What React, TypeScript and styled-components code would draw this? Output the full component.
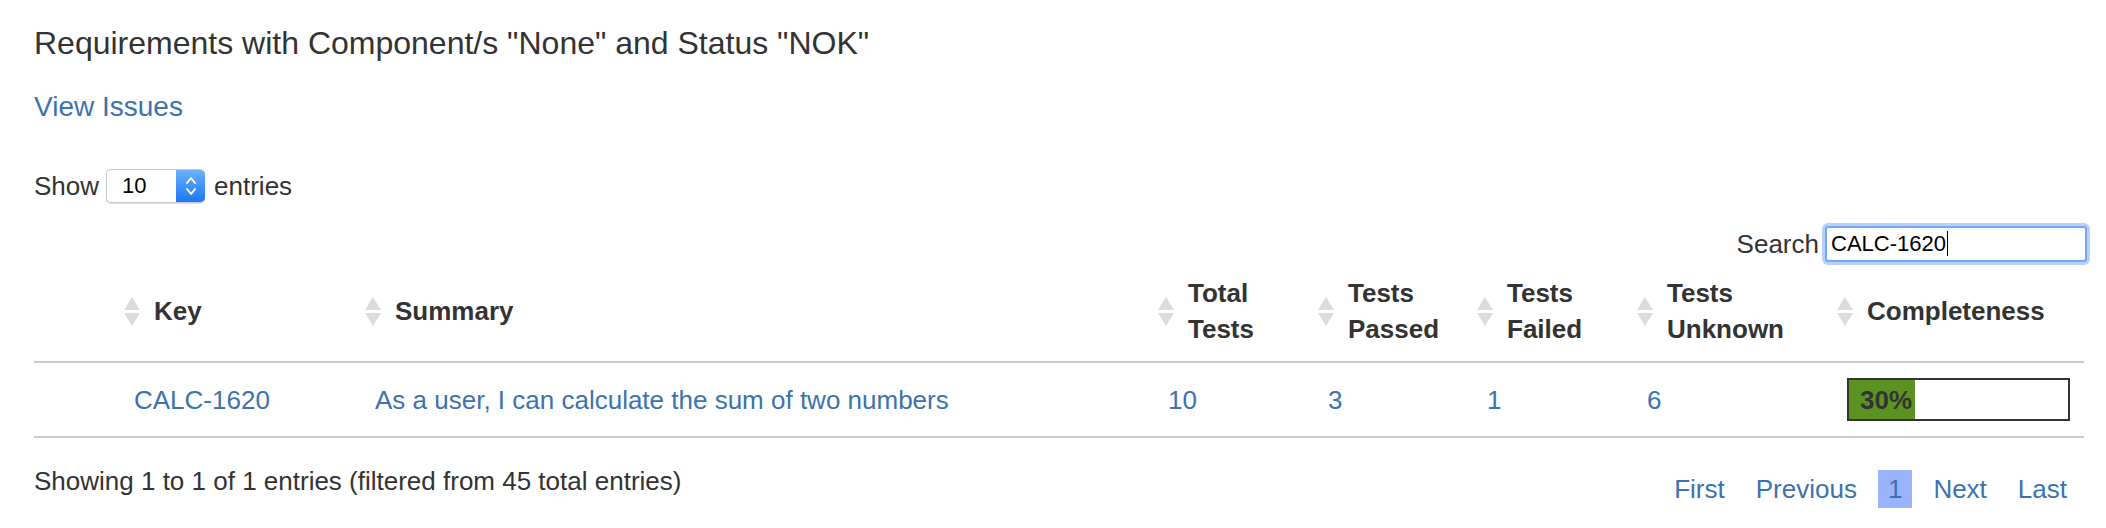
import React from "react";
import styled, { createGlobalStyle } from "styled-components";

const GlobalStyle = createGlobalStyle`
  html, body { margin: 0; padding: 0; background: #fff; }
  body {
    font-family: "Liberation Sans", Arial, Helvetica, sans-serif;
    color: #333;
  }
`;

const COLUMNS = "90px 241px 793px 160px 159px 160px 200px 247px";

const Page = styled.div`
  width: 2050px;
  padding: 24px 0 0 34px;
`;

const Title = styled.h2`
  margin: 0;
  font-size: 32px;
  line-height: 38px;
  font-weight: normal;
  color: #333;
`;

const ViewIssues = styled.a`
  display: block;
  width: max-content;
  margin-top: 28px;
  font-size: 28px;
  line-height: 34px;
  color: #3b73af;
  text-decoration: none;
`;

const LengthRow = styled.div`
  display: flex;
  align-items: center;
  margin-top: 45px;
  height: 34px;
  font-size: 26px;
  line-height: 34px;
`;

const SelectBox = styled.div`
  display: flex;
  box-sizing: border-box;
  width: 99px;
  height: 34px;
  margin: 0 9px 0 7px;
  border: 1px solid #c8c8c8;
  border-right: none;
  border-radius: 5px;
  background: #fff;
  box-shadow: 0 1px 1px rgba(0, 0, 0, 0.14);
  overflow: hidden;
`;

const SelectValue = styled.span`
  flex: 1;
  padding-left: 15px;
  font-size: 22px;
  line-height: 32px;
  color: #000;
`;

const Stepper = styled.span`
  display: flex;
  align-items: center;
  justify-content: center;
  width: 29px;
  background: linear-gradient(#6db2fb, #1a77f5);
`;

const FilterRow = styled.div`
  display: flex;
  justify-content: flex-end;
  align-items: center;
  margin-top: 19px;
  height: 43px;
  font-size: 26px;
  line-height: 34px;
`;

const SearchField = styled.div`
  display: flex;
  align-items: center;
  box-sizing: border-box;
  width: 262px;
  height: 36px;
  margin: 0 -3px 0 6px;
  padding-left: 4px;
  border: 2px solid #74a7f8;
  border-radius: 3px;
  box-shadow: 0 0 0 3px #b6d1fb;
  font-size: 22px;
  color: #000;
  background: #fff;
`;

const Caret = styled.span`
  width: 1px;
  height: 25px;
  margin-left: 1px;
  background: #000;
`;

const HeadRow = styled.div`
  display: grid;
  grid-template-columns: ${COLUMNS};
  align-items: center;
  padding: 10px 0 14px;
  border-bottom: 2px solid #ccc;
`;

const HeadCell = styled.div`
  display: flex;
  align-items: center;
  gap: 14px;
  font-size: 26px;
  line-height: 36px;
  font-weight: bold;
  color: #333;
`;

const BodyRow = styled.div`
  display: grid;
  grid-template-columns: ${COLUMNS};
  align-items: center;
  height: 73px;
  border-bottom: 2px solid #ccc;
`;

const Cell = styled.div`
  padding-left: 10px;
  font-size: 26px;
  line-height: 34px;
`;

const CellLink = styled.a`
  color: #3b73af;
  text-decoration: none;
`;

const Progress = styled.div`
  display: flex;
  box-sizing: border-box;
  width: 223px;
  height: 43px;
  border: 2px solid #333;
  background: #fff;
`;

const ProgressFill = styled.div`
  display: flex;
  align-items: center;
  box-sizing: border-box;
  height: 100%;
  padding-left: 11px;
  background: #5a9321;
  font-size: 26px;
  font-weight: bold;
  color: #333;
  white-space: nowrap;
`;

const Footer = styled.div`
  display: flex;
  justify-content: space-between;
  align-items: flex-start;
  font-size: 26px;
`;

const Info = styled.div`
  margin-top: 26px;
  line-height: 34px;
`;

const Pager = styled.div`
  display: flex;
  gap: 11px;
  margin: 32px 7px 0 0;
`;

const PageLink = styled.a<{ $current?: boolean }>`
  padding: 0 10px;
  line-height: 38px;
  color: #3b73af;
  background: ${(p) => (p.$current ? "#99b4fd" : "transparent")};
  text-decoration: none;
`;

const SortIcon = () => (
  <svg width="16" height="29" viewBox="0 0 16 29" aria-hidden="true">
    <path d="M8 0 L16 13 H0 Z" fill="#dcdcdc" />
    <path d="M0 16 H16 L8 29 Z" fill="#dcdcdc" />
  </svg>
);

const StepperIcon = () => (
  <svg width="14" height="24" viewBox="0 0 14 24" aria-hidden="true">
    <path d="M3 9 L7 4 L11 9" fill="none" stroke="#fff" strokeWidth="2" strokeLinecap="round" strokeLinejoin="round" />
    <path d="M3 15 L7 20 L11 15" fill="none" stroke="#fff" strokeWidth="2" strokeLinecap="round" strokeLinejoin="round" />
  </svg>
);

const headers: React.ReactNode[] = [
  "Key",
  "Summary",
  <>Total<br />Tests</>,
  <>Tests<br />Passed</>,
  <>Tests<br />Failed</>,
  <>Tests<br />Unknown</>,
  "Completeness",
];

const row = {
  key: "CALC-1620",
  summary: "As a user, I can calculate the sum of two numbers",
  total: 10,
  passed: 3,
  failed: 1,
  unknown: 6,
  completeness: 30,
};

export default function App() {
  return (
    <>
      <GlobalStyle />
      <Page>
        <Title>Requirements with Component/s "None" and Status "NOK"</Title>
        <ViewIssues href="#">View Issues</ViewIssues>

        <LengthRow>
          Show
          <SelectBox>
            <SelectValue>10</SelectValue>
            <Stepper>
              <StepperIcon />
            </Stepper>
          </SelectBox>
          entries
        </LengthRow>

        <FilterRow>
          Search
          <SearchField>
            CALC-1620
            <Caret />
          </SearchField>
        </FilterRow>

        <HeadRow>
          <div />
          {headers.map((h, i) => (
            <HeadCell key={i}>
              <SortIcon />
              <span>{h}</span>
            </HeadCell>
          ))}
        </HeadRow>

        <BodyRow>
          <div />
          <Cell><CellLink href="#">{row.key}</CellLink></Cell>
          <Cell><CellLink href="#">{row.summary}</CellLink></Cell>
          <Cell><CellLink href="#">{row.total}</CellLink></Cell>
          <Cell><CellLink href="#">{row.passed}</CellLink></Cell>
          <Cell><CellLink href="#">{row.failed}</CellLink></Cell>
          <Cell><CellLink href="#">{row.unknown}</CellLink></Cell>
          <Cell>
            <Progress>
              <ProgressFill style={{ width: `${row.completeness}%` }}>
                {row.completeness}%
              </ProgressFill>
            </Progress>
          </Cell>
        </BodyRow>

        <Footer>
          <Info>Showing 1 to 1 of 1 entries (filtered from 45 total entries)</Info>
          <Pager>
            <PageLink href="#">First</PageLink>
            <PageLink href="#">Previous</PageLink>
            <PageLink href="#" $current>1</PageLink>
            <PageLink href="#">Next</PageLink>
            <PageLink href="#">Last</PageLink>
          </Pager>
        </Footer>
      </Page>
    </>
  );
}
